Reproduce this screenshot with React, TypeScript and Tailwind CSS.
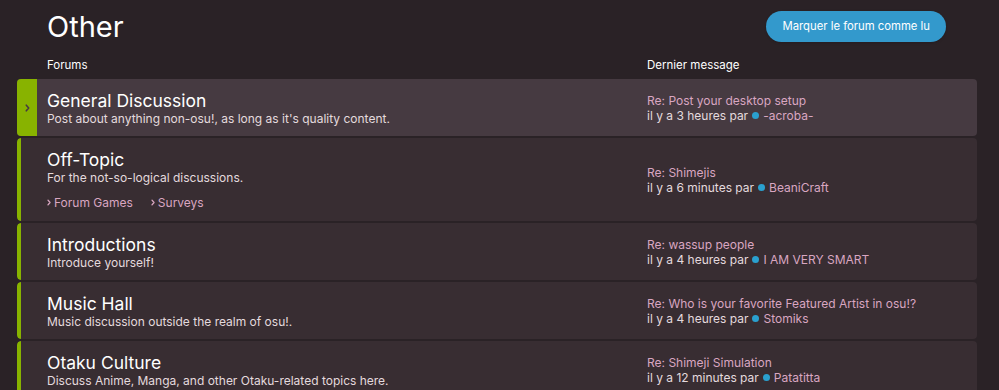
import React from "react";

interface IForum {
  title: string;
  desc: string;
  subs?: string[];
  topic: string;
  time: string;
  user: string;
  active?: boolean;
}

const forums: IForum[] = [
  {
    title: "General Discussion",
    desc: "Post about anything non-osu!, as long as it's quality content.",
    topic: "Re: Post your desktop setup",
    time: "il y a 3 heures par",
    user: "-acroba-",
    active: true,
  },
  {
    title: "Off-Topic",
    desc: "For the not-so-logical discussions.",
    subs: ["Forum Games", "Surveys"],
    topic: "Re: Shimejis",
    time: "il y a 6 minutes par",
    user: "BeaniCraft",
  },
  {
    title: "Introductions",
    desc: "Introduce yourself!",
    topic: "Re: wassup people",
    time: "il y a 4 heures par",
    user: "I AM VERY SMART",
  },
  {
    title: "Music Hall",
    desc: "Music discussion outside the realm of osu!.",
    topic: "Re: Who is your favorite Featured Artist in osu!?",
    time: "il y a 4 heures par",
    user: "Stomiks",
  },
  {
    title: "Otaku Culture",
    desc: "Discuss Anime, Manga, and other Otaku-related topics here.",
    topic: "Re: Shimeji Simulation",
    time: "il y a 12 minutes par",
    user: "Patatitta",
  },
];

const Chevron: React.FC<{ className?: string }> = ({ className }) => (
  <svg viewBox="0 0 6 10" className={className} fill="none" stroke="currentColor" strokeWidth={2} strokeLinecap="round" strokeLinejoin="round">
    <path d="M1.5 1.5 L4.5 5 L1.5 8.5" />
  </svg>
);

const ForumRow: React.FC<{ forum: IForum }> = ({ forum }) => {
  return (
    <div
      className={`flex rounded-[4px] overflow-hidden mb-[2px] ${
        forum.active ? "bg-[#463a41]" : "bg-[#382d32]"
      }`}
    >
      {forum.active ? (
        <div className="w-[20px] shrink-0 bg-[#88b300] flex items-center justify-center text-[#463a41]">
          <Chevron className="w-[5px] h-[8px]" />
        </div>
      ) : (
        <div className="w-[4px] shrink-0 bg-[#88b300] rounded-l-[4px]" />
      )}
      <div
        className={`flex-1 flex items-center ${
          forum.active ? "pl-[10px]" : "pl-[26px]"
        }`}
      >
        <div className="w-[600px] shrink-0 py-[10.5px]">
          <h3 className="text-[17.5px] leading-[21px] text-white">{forum.title}</h3>
          <p className="text-[12px] leading-[15px] text-[#e4dade]">{forum.desc}</p>
          {forum.subs && (
            <div className="flex gap-[18px] mt-[10px] text-[12px] leading-[16px] text-[#d9a6c1]">
              {forum.subs.map((s) => (
                <span key={s} className="flex items-center gap-[3px]">
                  <Chevron className="w-[4px] h-[7px]" />
                  {s}
                </span>
              ))}
            </div>
          )}
        </div>
        <div className="text-[12px] leading-[15px]">
          <div className="text-[#d9a6c1]">{forum.topic}</div>
          <div className="flex items-center text-[#e4dade]">
            {forum.time}
            <span className="inline-block w-[7px] h-[7px] rounded-full bg-[#2aa0cf] mx-[4px]" />
            <span className="text-[#d9a6c1]">{forum.user}</span>
          </div>
        </div>
      </div>
    </div>
  );
};

export default function App() {
  return (
    <div
      className="min-h-screen bg-[#2a2226] overflow-hidden"
      style={{ fontFamily: "Inter, 'Noto Sans', sans-serif" }}
    >
      <div className="ml-[17px] w-[960px]">
        <div className="flex items-center justify-between pl-[30px] pr-[31px] pt-[10px]">
          <h1 className="text-[29px] leading-[32px] text-white mt-[1px]">Other</h1>
          <button className="h-[31px] px-[16px] rounded-full bg-[#3399cc] text-[11.3px] text-white shadow-sm">
            Marquer le forum comme lu
          </button>
        </div>
        <div className="flex pl-[30px] mt-[15px] mb-[7px] text-[11.5px] leading-[14px] text-white">
          <div className="w-[600px]">Forums</div>
          <div>Dernier message</div>
        </div>
        {forums.map((f) => (
          <ForumRow key={f.title} forum={f} />
        ))}
      </div>
    </div>
  );
}
